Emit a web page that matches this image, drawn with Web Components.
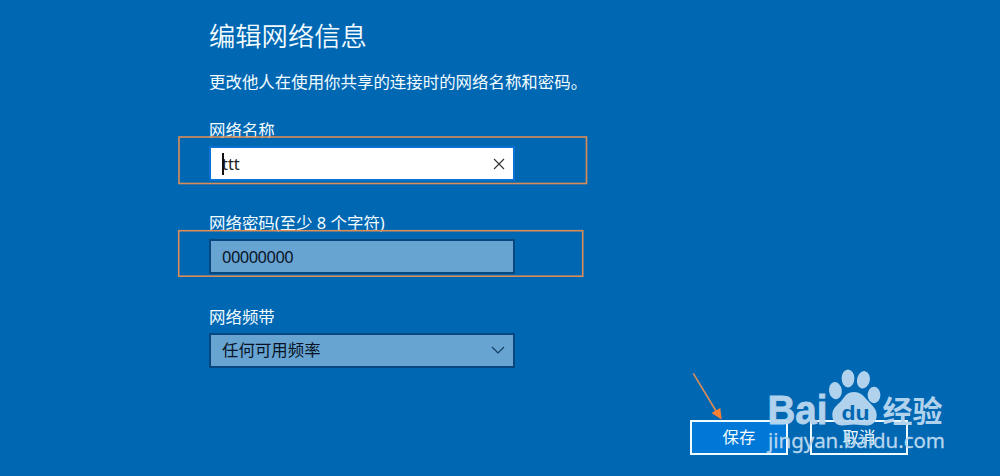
<!DOCTYPE html>
<html lang="zh-CN">
<head>
<meta charset="utf-8">
<title>编辑网络信息</title>
<style>
  html, body { margin: 0; height: 100%; overflow: hidden; }
  body {
    background: #0067b3;
    color: #f2fcff;
    font: 16.45px/24px "Noto Sans", "Noto Sans CJK SC", sans-serif;
  }
</style>
</head>
<body>

<template id="hotspot-page-template">
  <style>
    :host { display: block; position: relative; height: 476px; overflow: hidden; }
    main { padding: 18px 0 0 209px; width: 306px; box-sizing: content-box; }
    .title { margin: 0; font-size: 26.3px; line-height: 36px; font-weight: 350; white-space: nowrap; }
    .intro { margin: 16px 0 24px; white-space: nowrap; }
    .fields { display: flex; flex-direction: column; gap: 24px; }
    footer { display: flex; gap: 22px; margin: 46px 0 0 690px; }
  </style>
  <main>
    <h1 class="title"><slot name="title"></slot></h1>
    <p class="intro"><slot name="intro"></slot></p>
    <div class="fields"><slot></slot></div>
  </main>
  <footer><slot name="actions"></slot></footer>
  <slot name="overlay"></slot>
</template>

<template id="text-field-template">
  <style>
    :host { display: block; height: 69.3px; }
    .label { height: 24px; margin-bottom: 4px; line-height: 24px; white-space: nowrap; }
    .box {
      display: flex; align-items: center; justify-content: space-between;
      box-sizing: border-box; width: 306px; height: 35px; padding: 0 8px 0 11px;
      border: 2px solid #074780; background: #67a4d1; color: #071326;
    }
    :host([active]) .box { border-color: #0873d3; background: #fff; color: #222; }
    .value { position: relative; letter-spacing: var(--tracking, 0); }
    :host([active]) .value::before {
      content: ""; position: absolute; left: 0; top: 1px; width: 1.5px; height: 22px; background: #111;
    }
  </style>
  <div class="label"><slot name="label"></slot></div>
  <div class="box">
    <span class="value"><slot></slot></span>
    <slot name="icon"></slot>
  </div>
</template>

<template id="action-button-template">
  <style>
    :host {
      display: flex; align-items: center; justify-content: center;
      box-sizing: border-box; width: 98px; height: 35px;
      border: 2px solid #effcff;
    }
    :host([primary]) { background: #0078d7; }
  </style>
  <slot></slot>
</template>

<template id="highlight-marks-template">
  <style>
    :host { position: absolute; inset: 0; pointer-events: none; }
    svg { display: block; }
  </style>
  <svg width="1000" height="476" viewBox="0 0 1000 476" fill="none">
    <g stroke="#dc8d55" stroke-width="1.6">
      <rect x="179" y="137" width="407.5" height="46.5"/>
      <rect x="178.7" y="230.7" width="404" height="45.5"/>
      <path d="M693.3 373.3 716 411"/>
    </g>
    <path d="M721.6 419.5 711.5 413 720.3 408Z" fill="#ff8030"/>
  </svg>
</template>

<template id="site-watermark-template">
  <style>
    :host { position: absolute; left: 760px; top: 365px; pointer-events: none; }
    svg { display: block; }
    text { font-family: "Noto Sans", "Noto Sans CJK SC", sans-serif; }
    .brand { font-family: "Liberation Sans", sans-serif; font-weight: bold; }
  </style>
  <svg width="190" height="95" viewBox="0 0 190 95" fill="#b7d6ee">
    <g opacity=".97">
      <text class="brand" x="7.5" y="58.5" font-size="40" textLength="60" lengthAdjust="spacingAndGlyphs" stroke="#b7d6ee" stroke-width=".8">Bai</text>
      <ellipse cx="75.4" cy="25.6" rx="6.4" ry="8.7" transform="rotate(-8 75.4 25.6)"/>
      <ellipse cx="88" cy="13.4" rx="6.4" ry="9"/>
      <ellipse cx="103.4" cy="14.8" rx="6.4" ry="8.8" transform="rotate(12 103.4 14.8)"/>
      <ellipse cx="114" cy="30" rx="6.4" ry="8.3"/>
      <path d="M94 27c-7 0-9 4.2-12 8-4.5 5.5-9.7 7.5-9.7 15 0 6 4 10.5 9.700 10.500 5 0 7-1 12-1s8 1 13 1c6 0 9.700-4.500 9.700-10.500 0-6-4-9-8.700-14-4-4.500-7-9-14-9z"/>
      <text class="brand" x="81.5" y="54.5" font-size="20" textLength="28" lengthAdjust="spacingAndGlyphs" fill="#0067b3">du</text>
      <text x="122.5" y="57" font-size="30" font-weight="bold" textLength="60" lengthAdjust="spacingAndGlyphs">经验</text>
    </g>
    <text x="8" y="83" font-size="20.5" textLength="177" lengthAdjust="spacing" stroke="#b7d6ee" stroke-width=".3">jingyan.baidu.com</text>
  </svg>
</template>

<hotspot-page>
  <span slot="title">编辑网络信息</span>
  <span slot="intro">更改他人在使用你共享的连接时的网络名称和密码。</span>

  <text-field active>
    <span slot="label">网络名称</span>ttt
    <svg slot="icon" width="12" height="12" viewBox="0 0 12 12" fill="none" stroke="#333" stroke-width="1.1"><path d="M1 1 11 11M11 1 1 11"/></svg>
  </text-field>
  <text-field style="--tracking: -.5px">
    <span slot="label">网络密码(至少 8 个字符)</span>00000000
  </text-field>
  <text-field>
    <span slot="label">网络频带</span>任何可用频率
    <svg slot="icon" width="14" height="8" viewBox="0 0 14 8" fill="none" stroke="#123a60" stroke-width="1.1"><path d="M1 1 7 7 13 1"/></svg>
  </text-field>

  <action-button slot="actions" primary>保存</action-button>
  <action-button slot="actions">取消</action-button>

  <highlight-marks slot="overlay"></highlight-marks>
  <site-watermark slot="overlay"></site-watermark>
</hotspot-page>

<script>
/* Each element clones the template named after its tag */
['hotspot-page', 'text-field', 'action-button', 'highlight-marks', 'site-watermark'].forEach(name => {
  customElements.define(name,
    class extends HTMLElement {
      constructor() {
        super();
        let template = document.getElementById(name + '-template').content;
        this.attachShadow({mode: 'open'}).appendChild(template.cloneNode(true));
      }
  });
});
</script>
</body>
</html>
